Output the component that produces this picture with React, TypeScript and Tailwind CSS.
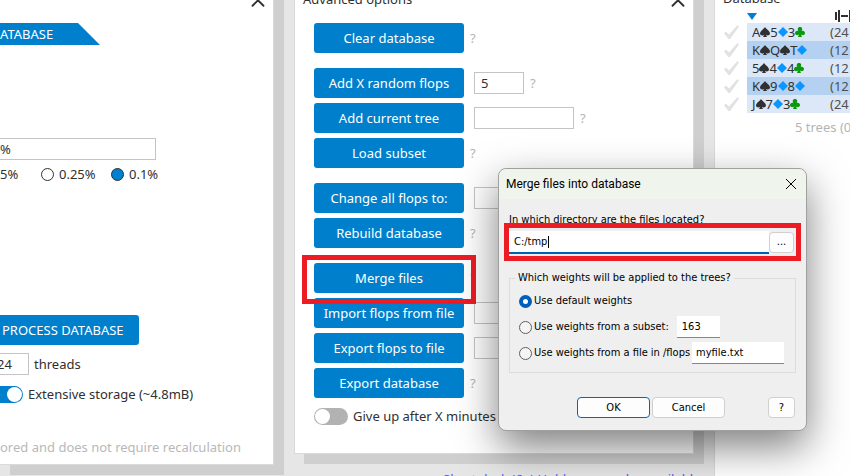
import type { ReactNode } from 'react'
import { ChevronUp } from 'lucide-react'

const suits: Record<string, { path: string; color: string }> = {
    s: { path: 'M5 0C6 2 10 4 10 6.500 10 8.500 7 9 5.800 7.700L7 10H3l1.200-2.300C3 9 0 8.500 0 6.500 0 4 4 2 5 0z', color: 'text-[#303030]' },
    d: { path: 'M5 0l5 5-5 5-5-5z', color: 'text-[#0a96ff]' },
    c: { path: 'M5 0C7.500 0 7.800 2.500 6.500 4 8.500 3.200 10 4.500 10 6 10 8.300 7 9 5.800 7L7 10H3l1.200-3C3 9 0 8.300 0 6 0 4.500 1.500 3.200 3.500 4 2.200 2.500 2.500 0 5 0z', color: 'text-[#0a990a]' },
}

const flops = [
    { cards: ['As', '5d', '3c'], weight: '(24' },
    { cards: ['Ks', 'Qs', 'Td'], weight: '(12' },
    { cards: ['5s', '4d', '4c'], weight: '(12' },
    { cards: ['Ks', '9d', '8d'], weight: '(12' },
    { cards: ['Js', '7d', '3c'], weight: '(24' },
]

function Panel({ children, className = '' }: { children: ReactNode; className?: string }) {
    return (
        <section className={`-mt-5 border border-[#dadada] bg-white pt-5 shadow-[10px_10px_0_#cfcfcf] ${className}`}>
            {children}
        </section>
    )
}

function PanelHeader({ title }: { title?: string }) {
    return (
        <header className="flex h-[7px] items-end justify-between pl-2 pr-1">
            <h2 className="mb-px leading-4">{title}</h2>
            <button type="button" aria-label="Collapse panel" className="-mb-1.5">
                <ChevronUp className="size-[22px]" strokeWidth={2} />
            </button>
        </header>
    )
}

function Help() {
    return <span className="text-[#b4b4b4]">?</span>
}

interface ActionRowProps {
    label: string
    field?: 'small' | 'wide'
    value?: string
    highlight?: boolean
}

function ActionRow({ label, field, value = '', highlight }: ActionRowProps) {
    return (
        <div className="relative flex items-center gap-[6px]">
            <button type="button" className="h-[30px] w-[150px] rounded-[3px] bg-[#0080cc] text-white">
                {label}
            </button>
            {field && (
                <input
                    type="text"
                    aria-label={label}
                    defaultValue={value}
                    className={`ml-1 h-[22px] border border-[#c4c4c4] bg-white px-1.5 ${field === 'small' ? 'w-[50px]' : 'w-[100px]'}`}
                />
            )}
            <Help />
            {highlight && (
                <span className="pointer-events-none absolute -left-3 -top-2 z-10 h-[49px] w-[174px] border-[5px] border-[#ed1c24]" />
            )}
        </div>
    )
}

function Toggle({ label, checked }: { label: string; checked?: boolean }) {
    return (
        <label className="flex items-center gap-[5px] whitespace-nowrap">
            <input type="checkbox" role="switch" defaultChecked={checked} className="peer sr-only" />
            <span className="flex h-[17px] w-[34px] items-center rounded-full bg-[#b2b2b2] p-px peer-checked:justify-end peer-checked:bg-[#0080cc]">
                <span className="size-[15px] rounded-full bg-white" />
            </span>
            {label}
        </label>
    )
}

function BuildPanel() {
    return (
        <Panel className="h-[485px] border-l-0">
            <PanelHeader />
            <div className="mt-[15px] flex h-[22px] w-[100px] items-center bg-[#0080cc] text-white [clip-path:polygon(0_0,78px_0,100%_100%,0_100%)]">
                ATABASE
            </div>
            <input
                type="text"
                aria-label="Accuracy"
                defaultValue="%"
                className="mt-[93px] block h-[22px] w-[156px] border border-l-0 border-[#c4c4c4] bg-white"
            />
            <div className="mt-1 flex h-5 items-center">
                <span className="w-[41px]">5%</span>
                <label className="flex w-[70px] items-center gap-[5px]">
                    <input type="radio" name="accuracy" className="size-[13px] appearance-none rounded-full border border-[#303030] checked:bg-[#0080cc]" />
                    0.25%
                </label>
                <label className="flex items-center gap-[5px]">
                    <input type="radio" name="accuracy" defaultChecked className="size-[13px] appearance-none rounded-full border border-[#303030] checked:bg-[#0080cc]" />
                    0.1%
                </label>
            </div>
            <button type="button" className="mt-[131px] block h-[30px] w-[139px] rounded-r-[3px] bg-[#0080cc] pl-[2px] text-left text-white">
                PROCESS DATABASE
            </button>
            <label className="mt-2 flex items-center gap-[5px]">
                <input type="text" defaultValue="24" className="-ml-1 h-[22px] w-[33px] border border-[#c4c4c4] bg-white" />
                threads
            </label>
            <div className="-ml-[11px] mt-[10px]">
                <Toggle label="Extensive storage (~4.8mB)" checked />
            </div>
            <p className="mt-[35px] whitespace-nowrap text-[#b8b8b8]">ored and does not require recalculation</p>
        </Panel>
    )
}

function AdvancedPanel() {
    return (
        <Panel className="h-[474px]">
            <PanelHeader title="Advanced options" />
            <div className="mt-[15px] flex flex-col gap-[15px] px-[19px]">
                <ActionRow label="Clear database" />
                <div className="flex flex-col gap-[5px]">
                    <ActionRow label="Add X random flops" field="small" value="5" />
                    <ActionRow label="Add current tree" field="wide" />
                    <ActionRow label="Load subset" />
                </div>
                <div className="flex flex-col gap-[5px]">
                    <ActionRow label="Change all flops to:" field="wide" />
                    <ActionRow label="Rebuild database" />
                </div>
                <div className="flex flex-col gap-[5px]">
                    <ActionRow label="Merge files" highlight />
                    <ActionRow label="Import flops from file" field="wide" />
                    <ActionRow label="Export flops to file" field="wide" />
                    <ActionRow label="Export database" />
                    <div className="mt-1">
                        <Toggle label="Give up after X minutes" />
                    </div>
                </div>
            </div>
        </Panel>
    )
}

function Cards({ cards }: { cards: string[] }) {
    return (
        <span className="flex items-center">
            {cards.map((card, i) => (
                <span key={i} className="flex items-center">
                    {card[0]}
                    <svg className={`size-[10px] ${suits[card[1]].color}`} viewBox="0 0 10 10" fill="currentColor">
                        <path d={suits[card[1]].path} />
                    </svg>
                </span>
            ))}
        </span>
    )
}

function DatabasePanel() {
    return (
        <section className="min-h-[476px] overflow-hidden border-l border-[#dadada] bg-white">
            <header className="flex h-[7px] items-end pl-2">
                <h2 className="mb-px leading-4">Database</h2>
            </header>
            <div className="flex h-4 items-center justify-between pl-8">
                <svg className="mt-[3px] h-[7px] w-[10px]" viewBox="0 0 10 7" fill="#0080cc">
                    <path d="M0 0h10L5 7z" />
                </svg>
                <svg className="mt-[2px] h-3 w-[15px]" viewBox="0 0 15 12" fill="#303030">
                    <path d="M0 2h2v8H0zM3 0h2v12H3zM6 5h7v2H6zM14 0h1v12h-1z" />
                </svg>
            </div>
            <table className="w-full border-collapse text-left">
                <tbody>
                    {flops.map(({ cards, weight }, i) => (
                        <tr key={i} className="h-[18px]">
                            <td className="w-8 p-0 pl-2">
                                <svg className="size-4" viewBox="0 0 16 16" fill="#e2e2e2">
                                    <path d="M1 9.500L3 7.500 6 10.500 14.500 1 16 2.500 7 15H5.500z" />
                                </svg>
                            </td>
                            <td className={`p-0 pl-[5px] ${i % 2 ? 'bg-[#b5d1f1]' : 'bg-[#dce8f8]'}`}>
                                <Cards cards={cards} />
                            </td>
                            <td className={`w-5 p-0 text-[#505050] ${i % 2 ? 'bg-[#b5d1f1]' : 'bg-[#dce8f8]'}`}>{weight}</td>
                        </tr>
                    ))}
                </tbody>
            </table>
            <p className="mt-[5px] whitespace-nowrap pl-20 text-[#b4b4b4]">5 trees (0</p>
        </section>
    )
}

interface WeightOptionProps {
    label: string
    checked?: boolean
    children?: ReactNode
}

function WeightOption({ label, checked, children }: WeightOptionProps) {
    return (
        <div className="flex h-[26px] items-center">
            <label className="flex items-center gap-[2px] whitespace-nowrap">
                <input
                    type="radio"
                    name="weights"
                    defaultChecked={checked}
                    className="size-[13px] appearance-none rounded-full border border-[#606060] bg-[#f5f5f5] checked:border-4 checked:border-[#005fb8] checked:bg-white"
                />
                {label}
            </label>
            {children}
        </div>
    )
}

function MergeDialog() {
    return (
        <div
            role="dialog"
            aria-label="Merge files into database"
            className="absolute left-[498px] top-[168px] z-20 w-[309px] rounded-lg border border-[#a0a0a0] bg-[#efefef] pb-3 font-['DejaVu_Sans_Condensed','DejaVu_Sans',sans-serif] text-[11px] leading-4 text-black shadow-[0_16px_40px_rgba(0,0,0,0.5)]"
        >
            <header className="flex h-[30px] items-center justify-between rounded-t-lg bg-[#eff4ec] pl-[7px] pr-[10px] font-['Roboto',sans-serif] text-[12px]">
                <h2>Merge files into database</h2>
                <button type="button" aria-label="Close">
                    <svg className="size-[10px]" viewBox="0 0 10 10" fill="none" stroke="currentColor">
                        <path d="M0 0l10 10M10 0L0 10" />
                    </svg>
                </button>
            </header>
            <label htmlFor="directory" className="mt-[13px] block pl-[10px]">In which directory are the files located?</label>
            <div className="relative mx-[5px] -mt-[5px] flex h-[38px] items-center border-[5px] border-[#ed1c24]">
                <input
                    id="directory"
                    type="text"
                    defaultValue="C:/tmp"
                    className="h-[23px] min-w-0 flex-1 border-b-2 border-[#005fb8] bg-white px-[5px]"
                />
                <span className="absolute left-[39px] top-2 h-3 w-px bg-black" />
                <button type="button" aria-label="Browse" className="mr-[2px] h-[21px] w-[25px] rounded border border-[#d0d0d0] bg-[#fdfdfd]">
                    ...
                </button>
            </div>
            <fieldset className="mx-[10px] mt-[9px] border border-[#dcdcdc] pb-1.5 pl-[9px]">
                <legend className="-ml-1 px-[3px]">Which weights will be applied to the trees?</legend>
                <div className="mt-[2px]">
                    <WeightOption label="Use default weights" checked />
                    <WeightOption label="Use weights from a subset:">
                        <input type="text" aria-label="Subset" defaultValue="163" className="ml-2 h-[22px] w-[43px] border-b border-[#868686] bg-white px-[5px]" />
                    </WeightOption>
                    <WeightOption label="Use weights from a file in /flops">
                        <input type="text" aria-label="Weights file" defaultValue="myfile.txt" className="ml-[2px] h-[22px] w-[92px] border-b border-[#868686] bg-white px-1" />
                    </WeightOption>
                </div>
            </fieldset>
            <footer className="mt-6 flex gap-[2px] pl-[78px] pr-[11px]">
                <button type="button" className="h-[21px] w-[73px] rounded border border-[#0067c0] bg-[#fdfdfd]">OK</button>
                <button type="button" className="h-[21px] w-[73px] rounded border border-[#d0d0d0] bg-[#fdfdfd]">Cancel</button>
                <button type="button" className="ml-auto h-[21px] w-[27px] rounded border border-[#d0d0d0] bg-[#fdfdfd]">?</button>
            </footer>
        </div>
    )
}

export default function App() {
    return (
        <div className="relative h-screen min-h-[476px] overflow-hidden bg-[#e6e6e6] font-['Noto_Sans',sans-serif] text-[13px] leading-[18px] text-[#303030]">
            <main className="grid grid-cols-[274px_400px_1fr] items-start gap-x-5">
                <BuildPanel />
                <div>
                    <AdvancedPanel />
                    <a href="#short-deck" className="mt-4 block whitespace-nowrap pl-[149px] text-[#5b5be8]">
                        Short deck (6+) Holdem now also available
                    </a>
                </div>
                <DatabasePanel />
            </main>
            <MergeDialog />
        </div>
    )
}
